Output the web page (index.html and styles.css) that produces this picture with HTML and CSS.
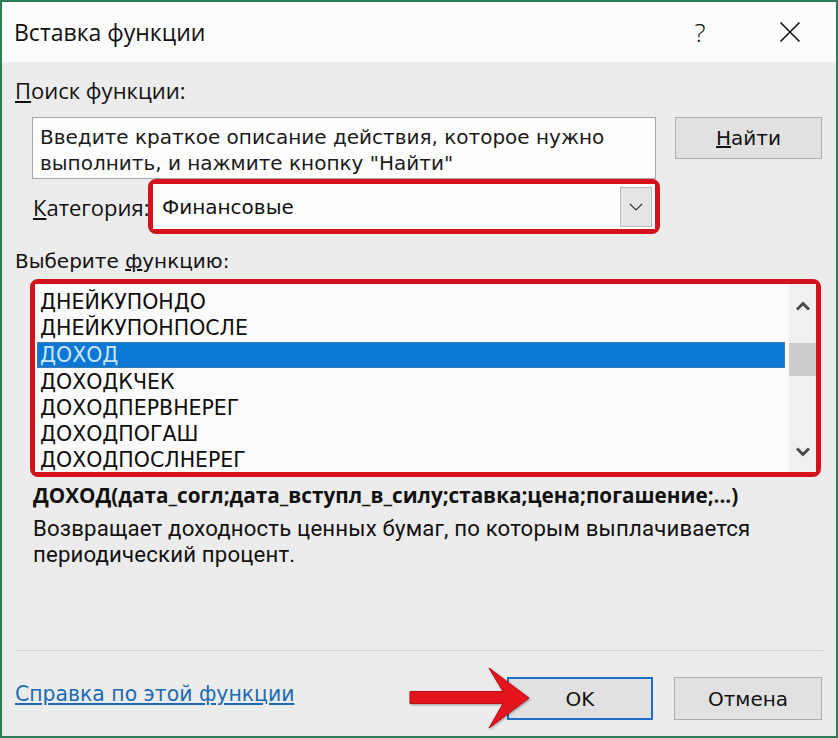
FILE: index.html
```html
<!DOCTYPE html>
<html lang="ru">
<head>
  <meta charset="UTF-8">
  <meta name="viewport" content="width=device-width, initial-scale=1.0">
  <title>Вставка функции</title>
  <link rel="stylesheet" href="styles.css">
</head>
<body>
  <div class="dialog">
    <div class="titlebar">
      <span class="title">Вставка функции</span>
      <div class="title-actions">
        <span class="title-btn help">?</span>
        <span class="title-btn">
          <svg width="22" height="22" viewBox="0 0 22 22"><path d="M1.5 1.5 L20.5 20.5 M20.5 1.5 L1.5 20.5" stroke="#111" stroke-width="1.6" fill="none"/></svg>
        </span>
      </div>
    </div>

    <div class="content">
      <div class="label search-label"><u>П</u>оиск функции:</div>
      <div class="search-row">
        <div class="search-box">Введите краткое описание действия, которое нужно выполнить, и нажмите кнопку "Найти"</div>
        <button class="btn find-btn"><u>Н</u>айти</button>
      </div>

      <div class="category-row">
        <span class="label category-label"><u>К</u>атегория:</span>
        <div class="highlight category-box">
          <div class="select">
            <span class="select-value">Финансовые</span>
            <span class="select-arrow">
              <svg width="14" height="8" viewBox="0 0 14 8"><path d="M1 1 L7 7 L13 1" stroke="#333" stroke-width="1.2" fill="none"/></svg>
            </span>
          </div>
        </div>
      </div>

      <div class="list-label">Выберите <u>ф</u>ункцию:</div>
      <div class="highlight list-box">
        <div class="list">
          <div class="list-items">
            <div class="list-item">ДНЕЙКУПОНДО</div>
            <div class="list-item">ДНЕЙКУПОНПОСЛЕ</div>
            <div class="list-item selected">ДОХОД</div>
            <div class="list-item">ДОХОДКЧЕК</div>
            <div class="list-item">ДОХОДПЕРВНЕРЕГ</div>
            <div class="list-item">ДОХОДПОГАШ</div>
            <div class="list-item">ДОХОДПОСЛНЕРЕГ</div>
          </div>
          <div class="scrollbar">
            <div class="sb-btn">
              <svg width="16" height="10" viewBox="0 0 16 10"><path d="M2 8.5 L8 2.5 L14 8.5" stroke="#4a4a4a" stroke-width="3" fill="none"/></svg>
            </div>
            <div class="sb-thumb"></div>
            <div class="sb-space"></div>
            <div class="sb-btn">
              <svg width="16" height="10" viewBox="0 0 16 10"><path d="M2 1.5 L8 7.5 L14 1.5" stroke="#4a4a4a" stroke-width="3" fill="none"/></svg>
            </div>
          </div>
        </div>
      </div>

      <div class="signature">ДОХОД(дата_согл;дата_вступл_в_силу;ставка;цена;погашение;...)</div>
      <div class="description">
        <div>Возвращает доходность ценных бумаг, по которым выплачивается</div>
        <div>периодический процент.</div>
      </div>

      <div class="footer">
        <a class="help-link" href="#">Справка по этой функции</a>
        <div class="footer-buttons">
          <button class="btn ok-btn">OK</button>
          <button class="btn">Отмена</button>
        </div>
      </div>
    </div>

    <!-- red pointer drawn over the OK button -->
    <svg class="pointer" width="130" height="70" viewBox="405 662 130 70">
      <polygon points="410,691.5 503,691.5 489,668 529,698 489,728 503,703.5 410,703.5" fill="#e3141c" stroke="#b80d14" stroke-width="1"/>
    </svg>
  </div>
</body>
</html>
```
FILE: styles.css
```css
body {
  margin: 0;
  padding: 0;
  background-color: #ececec;
}
.dialog {
  position: relative;
  width: 838px;
  height: 738px;
  box-sizing: border-box;
  border: 2px solid #2d7d55;
  background-color: #ececec;
  display: flex;
  flex-direction: column;
  color: #111;
}
.titlebar {
  height: 60px;
  background-color: #fcfcfc;
  display: flex;
  align-items: center;
  padding-left: 12px;
}
.title {
  font-family: "Open Sans", sans-serif;
  font-size: 23px;
  color: #111;
}
.title-actions {
  margin-left: auto;
  display: flex;
  gap: 30px;
  padding-right: 16px;
}
.title-btn {
  width: 60px;
  height: 40px;
  display: flex;
  align-items: center;
  justify-content: center;
}
.title-btn.help {
  font-family: "Open Sans", sans-serif;
  font-weight: 300;
  font-size: 26px;
}
.content {
  flex: 1;
  display: flex;
  flex-direction: column;
  padding: 0 14px 0 13px;
}
.label {
  font-family: "Open Sans", sans-serif;
  font-size: 22px;
  line-height: 28px;
}
.search-label {
  margin-top: 14px;
}
.search-row {
  display: flex;
  align-items: flex-start;
  margin-top: 13px;
}
.search-box {
  margin-left: 17px;
  width: 624px;
  height: 62px;
  box-sizing: border-box;
  border: 1px solid #a6a6a6;
  background-color: #fdfdfd;
  padding: 6px 7px;
  font-family: "DejaVu Sans", sans-serif;
  font-size: 20px;
  line-height: 26px;
  color: #1a1a1a;
}
.btn {
  width: 148px;
  height: 43px;
  box-sizing: border-box;
  border: 1px solid #adadad;
  background-color: #e1e1e1;
  font-family: "DejaVu Sans", sans-serif;
  font-size: 20px;
  color: #111;
  padding: 0;
}
.find-btn {
  margin-left: auto;
  width: 147px;
  height: 42px;
}
.category-row {
  display: flex;
  align-items: center;
  height: 55px;
}
.category-label {
  margin-left: 18px;
  width: 115px;
  white-space: nowrap;
}
.highlight {
  box-sizing: border-box;
  border: 5px solid #d3121c;
  border-radius: 8px;
}
.category-box {
  width: 512px;
  height: 55px;
}
.select {
  height: 100%;
  background-color: #fdfdfd;
  display: flex;
  align-items: center;
  padding-left: 9px;
}
.select-value {
  font-family: "DejaVu Sans", sans-serif;
  font-size: 20px;
}
.select-arrow {
  margin-left: auto;
  margin-right: 3px;
  width: 32px;
  height: 40px;
  box-sizing: border-box;
  border: 1px solid #b9b9b9;
  background-color: #e6e6e6;
  display: flex;
  align-items: center;
  justify-content: center;
}
.list-label {
  margin-top: 13px;
  font-family: "DejaVu Sans", sans-serif;
  font-size: 20px;
  line-height: 28px;
}
.list-box {
  margin: 4px 0 0 15px;
  width: 791px;
  height: 198px;
}
.list {
  height: 100%;
  display: flex;
  background-color: #fbfbfb;
}
.list-items {
  flex: 1;
  padding-top: 5px;
}
.list-item {
  height: 26px;
  line-height: 26px;
  padding-left: 5px;
  font-family: "DejaVu Sans", sans-serif;
  font-size: 20.5px;
  color: #0d0d0d;
}
.list-item.selected {
  margin: 0 4px 2px 2px;
  padding-left: 2px;
  height: 24px;
  line-height: 24px;
  border: 1px dotted #6a7f90;
  background-color: #0a78d4;
  color: #cfe5f8;
  position: relative;
  top: 1px;
}
.scrollbar {
  width: 27px;
  background-color: #f0f0f0;
  display: flex;
  flex-direction: column;
}
.sb-btn {
  height: 44px;
  display: flex;
  align-items: center;
  justify-content: center;
}
.sb-btn:last-child {
  height: 40px;
}
.sb-thumb {
  margin-top: 15px;
  height: 33px;
  background-color: #cdcdcd;
}
.sb-space {
  flex: 1;
}
.signature {
  margin: 4px 0 0 18px;
  font-family: "Open Sans", sans-serif;
  font-weight: 700;
  font-size: 20.7px;
  line-height: 28px;
  white-space: nowrap;
}
.description {
  margin: 6px 0 0 18px;
  font-family: Roboto, sans-serif;
  font-size: 22.2px;
  letter-spacing: 0.17px;
  line-height: 26px;
  white-space: nowrap;
}
.footer {
  margin-top: auto;
  height: 86px;
  box-sizing: border-box;
  border-top: 1px solid #d2d2d2;
  display: flex;
  align-items: flex-start;
  margin-right: -1px;
}
.help-link {
  margin-top: 29px;
  font-family: "DejaVu Sans", sans-serif;
  font-size: 20.4px;
  line-height: 28px;
  color: #1a6bb3;
  text-decoration: underline;
}
.footer-buttons {
  margin-left: auto;
  margin-right: 1px;
  margin-top: 26px;
  display: flex;
  gap: 21px;
}
.ok-btn {
  width: 146px;
  border: 2px solid #1f6fc5;
}
.pointer {
  position: absolute;
  left: 403px;
  top: 660px;
  filter: drop-shadow(1px 1px 1px rgba(0, 0, 0, 0.35));
}
```
